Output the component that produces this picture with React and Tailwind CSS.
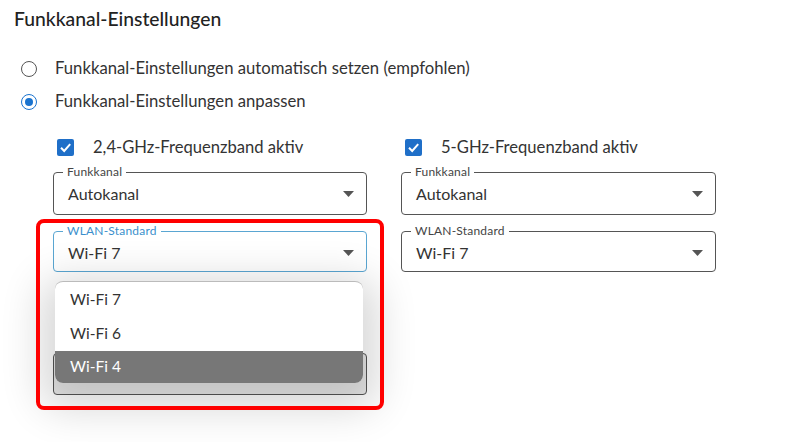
import React from "react";

const Arrow = () => (
  <svg width="11" height="6" viewBox="0 0 11 6" className="shrink-0">
    <path d="M0 0 L11 0 L5.5 6 Z" fill="#555" />
  </svg>
);

const Select = ({ label, value, focused, h = 32, pb = 4 }) => (
  <fieldset
    className={
      "rounded-[4px] border pl-[9px] pr-[12px] " +
      (focused ? "border-[#5aa6d2]" : "border-[#555]")
    }
  >
    <legend
      className={
        "px-[4px] text-[12px] leading-[12px] tracking-[0.2px] " +
        (focused ? "text-[#3b8fcc]" : "text-[#444]")
      }
    >
      {label}
    </legend>
    <div
      className="flex items-center justify-between pl-[5px] text-[16px] text-[#333]"
      style={{ height: h, marginBottom: pb }}
    >
      <span>{value}</span>
      <Arrow />
    </div>
  </fieldset>
);

const Check = ({ label }) => (
  <div className="ml-[4px] flex h-[20px] items-center gap-[19px]">
    <div className="flex h-[17px] w-[17px] items-center justify-center rounded-[2px] bg-[#1f6fc8]">
      <svg width="13" height="13" viewBox="0 0 13 13">
        <path d="M2 6.8 L5.2 10 L11.2 3.2" fill="none" stroke="#fff" strokeWidth="2" />
      </svg>
    </div>
    <span className="text-[16.6px] text-[#333]">{label}</span>
  </div>
);

export default function App() {
  return (
    <div
      className="relative h-[442px] w-[800px] overflow-hidden bg-white"
      style={{ fontFamily: "Lato, 'Noto Sans', sans-serif" }}
    >
      <div className="flex flex-col">
        <div className="ml-[14px] mt-[7px] text-[19.3px] font-medium leading-[24px] text-[#222]">
          Funkkanal-Einstellungen
        </div>
        <div className="ml-[21px] mt-[27px] flex h-[22px] items-center gap-[18px]">
          <div className="h-[16px] w-[16px] rounded-full border-[1.5px] border-[#555]" />
          <span className="text-[16.7px] text-[#333]">
            Funkkanal-Einstellungen automatisch setzen (empfohlen)
          </span>
        </div>
        <div className="ml-[21px] mt-[11px] flex h-[22px] items-center gap-[18px]">
          <div className="flex h-[16px] w-[16px] items-center justify-center rounded-full border-[1.5px] border-[#1a73cf]">
            <div className="h-[8px] w-[8px] rounded-full bg-[#1a73cf]" />
          </div>
          <span className="text-[16.7px] text-[#333]">Funkkanal-Einstellungen anpassen</span>
        </div>
        <div className="ml-[53px] mt-[24px] flex gap-[34px]">
          <div className="flex w-[314px] flex-col">
            <Check label="2,4-GHz-Frequenzband aktiv" />
            <div className="mt-[9px]">
              <Select label="Funkkanal" value="Autokanal" />
            </div>
            <div className="mt-[10px]">
              <Select label="WLAN-Standard" value="Wi-Fi 7" focused pb={2} />
            </div>
            <div className="mt-[81px] h-[42px] rounded-[4px] border border-[#555] bg-[#e8e8e8]" />
          </div>
          <div className="flex w-[315px] flex-col">
            <Check label="5-GHz-Frequenzband aktiv" />
            <div className="mt-[9px]">
              <Select label="Funkkanal" value="Autokanal" />
            </div>
            <div className="mt-[10px]">
              <Select label="WLAN-Standard" value="Wi-Fi 7" pb={2} />
            </div>
          </div>
        </div>
      </div>

      {/* open dropdown menu */}
      <div className="absolute left-[55px] top-[281px] w-[308px] overflow-hidden rounded-[8px] border-t border-[#bbb] bg-white text-[15.5px] shadow-[0_12px_40px_14px_rgba(0,0,0,0.16)]">
        <div className="flex h-[35px] items-center pl-[15px] text-[#333]">Wi-Fi 7</div>
        <div className="flex h-[34px] items-center pl-[15px] text-[#333]">Wi-Fi 6</div>
        <div className="flex h-[32px] items-center bg-[#777] pl-[15px] text-white">Wi-Fi 4</div>
      </div>

      {/* red highlight annotation */}
      <div className="pointer-events-none absolute left-[36px] top-[219px] h-[191px] w-[348px] rounded-[8px] border-[4px] border-[#ff0000]" />
    </div>
  );
}
